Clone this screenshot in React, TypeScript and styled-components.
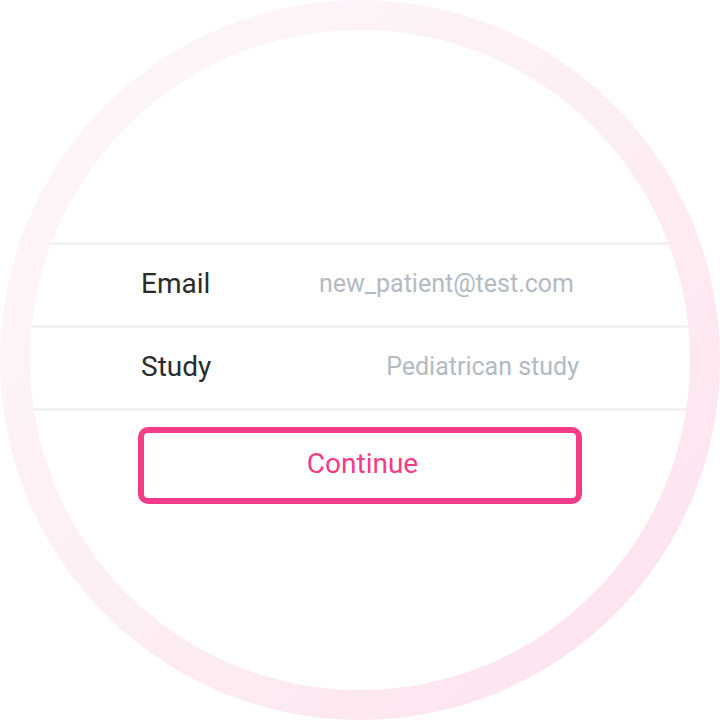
import React from 'react';
import styled, { createGlobalStyle } from 'styled-components';

const GlobalStyle = createGlobalStyle`
  html, body {
    margin: 0;
    padding: 0;
    background: #ffffff;
  }
  body {
    font-family: Roboto, "Liberation Sans", Arial, sans-serif;
  }
`;

const Stage = styled.div`
  width: 720px;
  height: 720px;
  overflow: hidden;
`;

const Ring = styled.div`
  width: 720px;
  height: 720px;
  box-sizing: border-box;
  padding: 30px;
  border-radius: 50%;
  background: linear-gradient(135deg, #fef8fb 0%, #fdeef5 50%, #fde1ee 100%);
`;

const Face = styled.div`
  width: 660px;
  height: 660px;
  border-radius: 50%;
  overflow: hidden;
  background: #ffffff;
  display: flex;
  flex-direction: column;
  padding-top: 212px;
  box-sizing: border-box;
`;

const List = styled.div`
  display: flex;
  flex-direction: column;
  border-bottom: 3px solid #f2f2f4;
`;

const Row = styled.div`
  height: 83px;
  box-sizing: border-box;
  border-top: 3px solid #f2f2f4;
  display: flex;
  align-items: center;
  justify-content: space-between;
  padding: 0 111px 3px;
`;

const Label = styled.span`
  font-size: 28px;
  color: #2a2b2d;
`;

const Value = styled.span<{ $trail?: number }>`
  font-size: 25px;
  color: #b3bac2;
  margin-right: ${(p) => p.$trail ?? 0}px;
`;

const Actions = styled.div`
  display: flex;
  justify-content: center;
  padding-top: 16px;
`;

const OutlineButton = styled.button`
  width: 444px;
  height: 77px;
  box-sizing: border-box;
  border: 6px solid #f43c88;
  border-radius: 10px;
  background: #ffffff;
  color: #f43c88;
  font-family: Roboto, "Liberation Sans", Arial, sans-serif;
  font-size: 28px;
  padding: 0 0 4px 5px;
  cursor: pointer;
`;

const fields = [
  { label: 'Email', value: 'new_patient@test.com', trail: 5 },
  { label: 'Study', value: 'Pediatrican study', trail: 0 },
];

export default function App() {
  return (
    <Stage>
      <GlobalStyle />
      <Ring>
        <Face>
          <List>
            {fields.map((f) => (
              <Row key={f.label}>
                <Label>{f.label}</Label>
                <Value $trail={f.trail}>{f.value}</Value>
              </Row>
            ))}
          </List>
          <Actions>
            <OutlineButton>Continue</OutlineButton>
          </Actions>
        </Face>
      </Ring>
    </Stage>
  );
}
